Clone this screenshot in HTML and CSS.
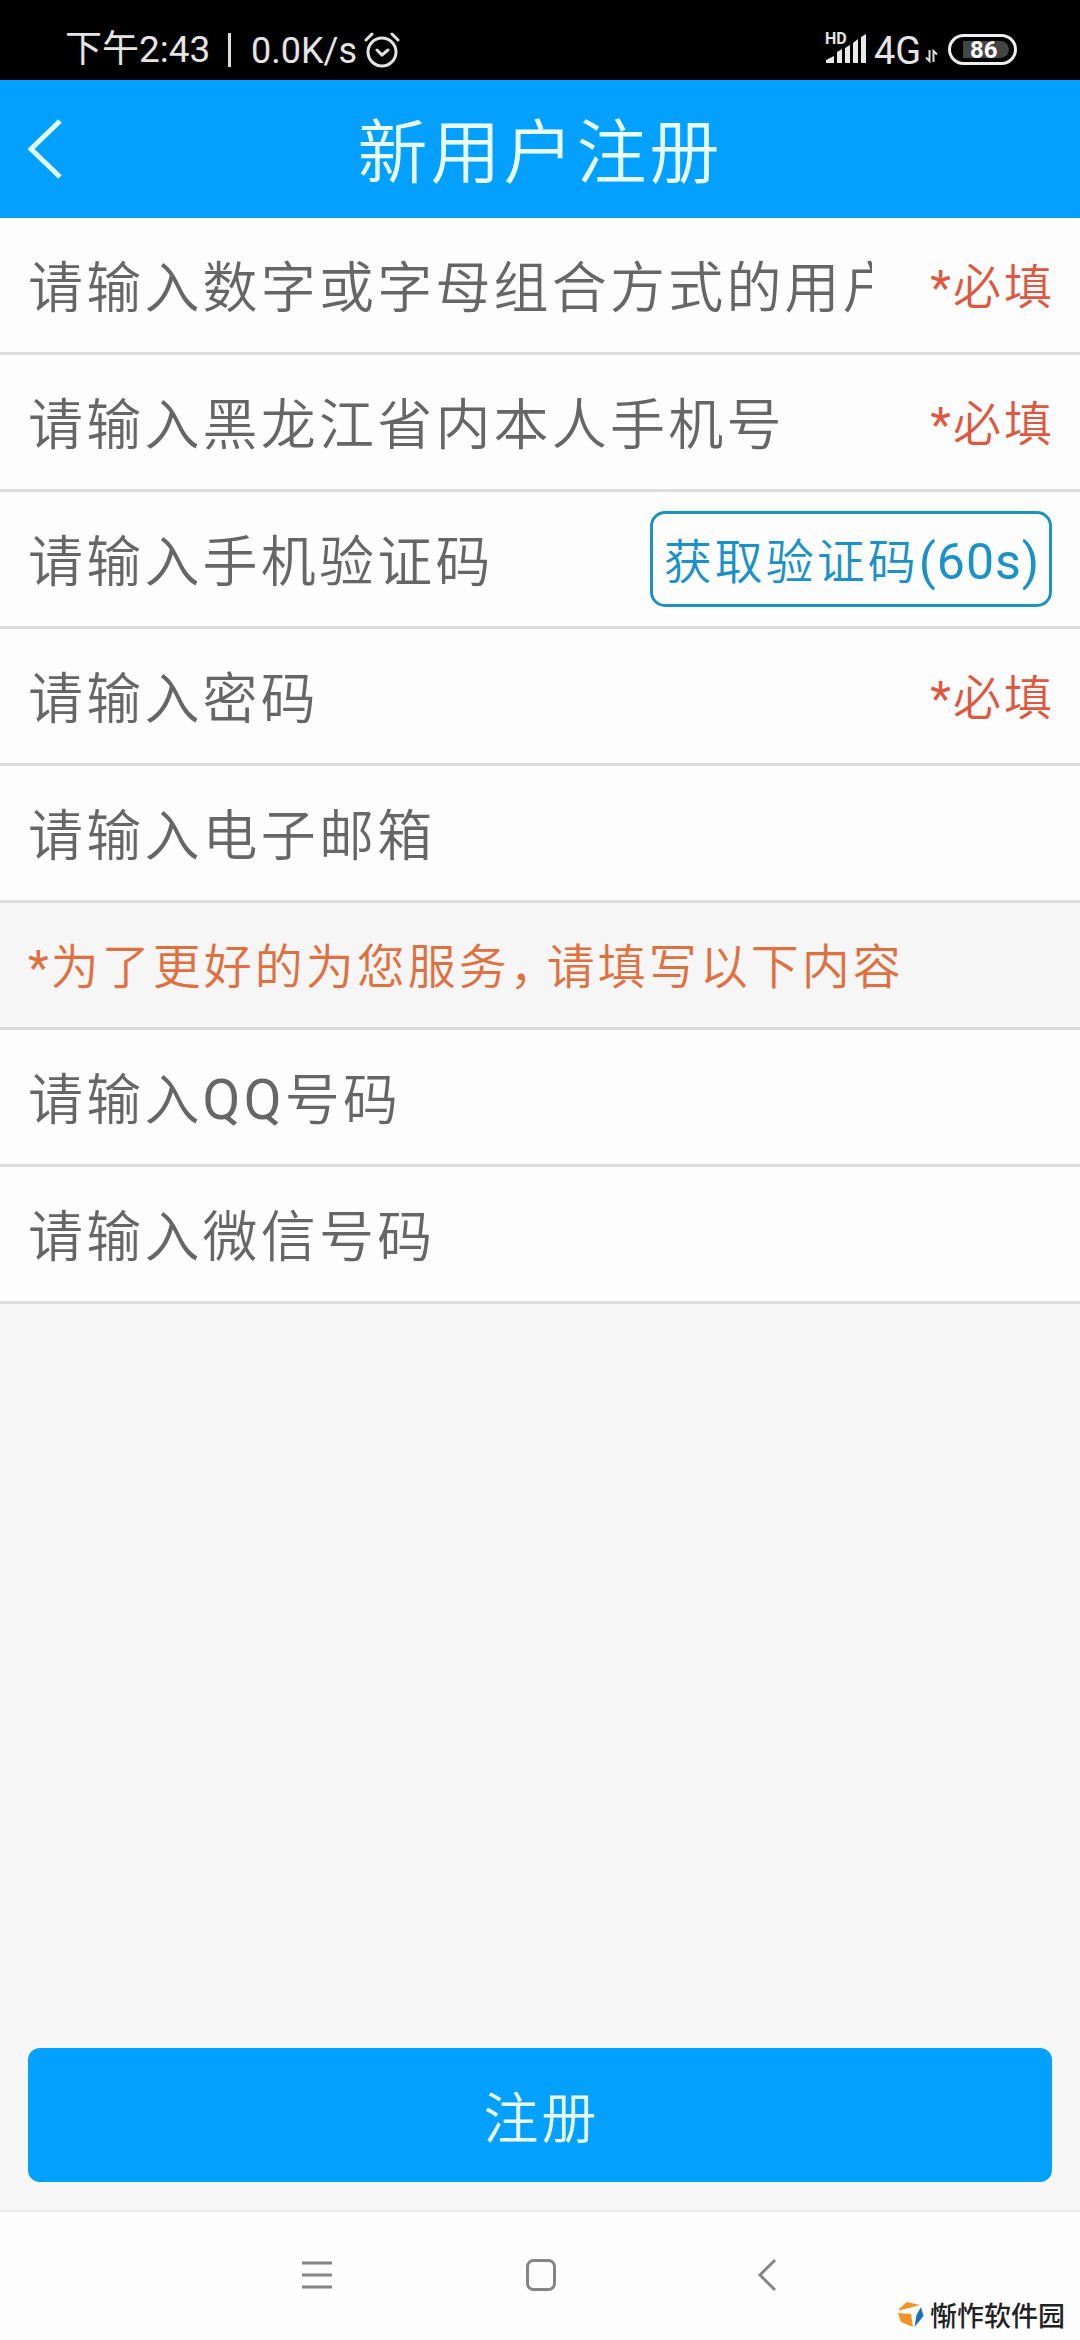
FILE: index.html
```html
<!DOCTYPE html>
<html lang="zh-CN">
<head>
  <meta charset="UTF-8" />
  <meta name="viewport" content="width=device-width, initial-scale=1.0" />
  <title>新用户注册</title>
  <link rel="stylesheet" href="styles.css">
</head>
<body>

  <!-- 状态栏 -->
  <div class="status-bar">
    <div class="status-left">
      <span class="clock">下午2:43</span>
      <span class="divider"></span>
      <span class="speed">0.0K/s</span>
      <svg class="alarm" width="36" height="36" viewBox="0 0 36 36">
        <circle cx="18" cy="20" r="14" />
        <path d="M13 18l5 5 6-5M2 8l6-6M34 8l-6-6" />
      </svg>
    </div>
    <div class="status-right">
      <div class="signal">
        <span class="hd">HD</span>
        <svg width="42" height="32" viewBox="0 0 42 32">
          <path d="M1 30v-3l8-4v7zM12 30V19l5-3v14zM20 30V15l5-3v18zM28 30V10l5-4v24zM36 30V4l5-3v29z" />
        </svg>
      </div>
      <span class="network">4G</span>
      <svg class="arrows" width="13" height="14" viewBox="0 0 13 14">
        <path d="M4.500 1v11L1 8.500M8.500 13V2l3.500 3.500" />
      </svg>
      <div class="battery"><span class="battery-level">86</span></div>
    </div>
  </div>

  <!-- 标题 -->
  <div class="header">
    <svg class="back-icon" width="36" height="62" viewBox="0 0 36 62">
      <path d="M32 3L3 31l29 28" />
    </svg>
    <h1>新用户注册</h1>
  </div>

  <!-- 注册表单 -->
  <form class="register-form">
    <div class="row">
      <input type="text" placeholder="请输入数字或字母组合方式的用户名">
      <span class="required"><span class="star">*</span>必填</span>
    </div>
    <div class="row">
      <input type="text" placeholder="请输入黑龙江省内本人手机号">
      <span class="required"><span class="star">*</span>必填</span>
    </div>
    <div class="row">
      <input type="text" class="code-input" placeholder="请输入手机验证码">
      <button type="button" class="code-button">获取验证码<span class="seconds">(60s)</span></button>
    </div>
    <div class="row">
      <input type="password" placeholder="请输入密码">
      <span class="required"><span class="star">*</span>必填</span>
    </div>
    <div class="row">
      <input type="text" placeholder="请输入电子邮箱">
    </div>
    <p class="notice"><span class="star">*</span>为了更好的为您服务<span class="comma">，</span>请填写以下内容</p>
    <div class="row">
      <input type="text" class="qq-input" placeholder="请输入QQ号码">
    </div>
    <div class="row">
      <input type="text" placeholder="请输入微信号码">
    </div>
    <button type="submit" class="submit-button">注册</button>
  </form>

  <!-- 导航栏 -->
  <div class="nav-bar">
    <svg width="32" height="34" viewBox="0 0 32 34">
      <path d="M1 5h30M1 17h30M1 29h30" />
    </svg>
    <svg class="home-icon" width="34" height="34" viewBox="0 0 34 34">
      <rect x="3.500" y="2.500" width="27" height="29" rx="6" />
    </svg>
    <svg width="20" height="34" viewBox="0 0 20 34">
      <path d="M18 2L3 17l15 15" />
    </svg>
    <div class="watermark">
      <svg width="26" height="27" viewBox="0 0 26 27">
        <path fill="#f39325" d="M1 8l8-7 13 3-9 2.500-12 3zM0 12l13 1 2 13-12-5z" />
        <path fill="#1d70b8" d="M23 6l2.500 9-9 11 2-12z" />
      </svg>
      <span>惭怍软件园</span>
    </div>
  </div>

</body>
</html>
```
FILE: styles.css
```css
* {
  box-sizing: border-box;
}

body {
  margin: 0;
  height: 2340px;
  display: flex;
  flex-direction: column;
  background-color: #f7f7f7;
  font-family: Roboto, 'Noto Sans CJK SC', sans-serif;
  overflow: hidden;
}

svg {
  display: block;
  fill: none;
  flex-shrink: 0;
}

input, button {
  font-family: inherit;
  font-weight: 350;
}

.status-bar {
  height: 80px;
  padding: 20px 63px 0 65px;
  display: flex;
  justify-content: space-between;
  background-color: #000;
  color: #e4e4e4;
  font-size: 37px;
}

.status-left, .status-right {
  height: 60px;
  display: flex;
  align-items: center;
  white-space: nowrap;
}

.status-right {
  height: 58px;
}

.clock {
  width: 145px;
  font-size: 37px;
  line-height: 44px;
}

.divider {
  width: 3px;
  height: 34px;
  margin: 0 20px 0 18px;
  background-color: #ddd;
}

.speed {
  width: 113px;
  padding-top: 2px;
  font-size: 36px;
}

.alarm {
  stroke: #e4e4e4;
  stroke-width: 3;
  stroke-linecap: round;
}

.signal {
  position: relative;
  margin-right: 7px;
}

.signal svg {
  fill: #e8e8e8;
}

.hd {
  position: absolute;
  left: 0;
  top: -2px;
  font-size: 16px;
  line-height: 16px;
  font-weight: 700;
}

.network {
  width: 51px;
  padding-top: 3px;
  font-size: 38px;
}

.arrows {
  margin: 14px 10px 0 0;
  stroke: #ddd;
  stroke-width: 2;
}

.battery {
  width: 69px;
  height: 31px;
  padding: 4px 5px 4px 12px;
  border: 3px solid #eee;
  border-radius: 16px;
}

.battery-level {
  display: block;
  height: 17px;
  border-radius: 0 9px 9px 0;
  background-color: #444;
  color: #fff;
  font-size: 24px;
  line-height: 18px;
  font-weight: 700;
  padding-left: 7px;
}

.header {
  height: 138px;
  padding: 0 28px;
  display: grid;
  grid-template-columns: 36px 1fr 36px;
  align-items: center;
  background-color: #03a0ff;
  color: #e9ffff;
}

.header h1 {
  margin: 0;
  padding-top: 9px;
  font-size: 70px;
  line-height: 100px;
  font-weight: 350;
  letter-spacing: 3px;
  text-align: center;
}

.back-icon {
  stroke: #e0ffff;
  stroke-width: 5;
}

.register-form {
  flex: 1;
  display: flex;
  flex-direction: column;
}

.row {
  height: 137px;
  padding: 0 28px;
  display: flex;
  align-items: center;
  justify-content: space-between;
  background-color: #fdfdfd;
  border-bottom: 3px solid #dcdcdc;
}

.row input {
  width: 844px;
  height: 106px;
  padding: 5px 0 0;
  border: none;
  outline: none;
  background: transparent;
  font-size: 55px;
  letter-spacing: 3.200px;
}

.row input::placeholder {
  color: #666;
  opacity: 1;
}

.row .code-input {
  width: 600px;
}

.row .qq-input {
  font-family: Roboto, 'Noto Sans CJK SC DemiLight', 'Noto Sans CJK SC', sans-serif;
  font-weight: 400;
}

.required {
  margin-right: -3px;
  padding-bottom: 4px;
  color: #de5740;
  font-size: 48px;
  font-weight: 350;
  letter-spacing: 3px;
  white-space: nowrap;
}

.star {
  font-weight: 400;
  letter-spacing: 2px;
}

.code-button {
  width: 402px;
  height: 96px;
  padding: 0 0 2px 2px;
  border: 3px solid #1c93bf;
  border-radius: 15px;
  background: transparent;
  color: #1a91c8;
  font-size: 48px;
  letter-spacing: 3px;
  white-space: nowrap;
}

.seconds {
  font-size: 50px;
  font-weight: 400;
  letter-spacing: 1px;
}

.notice {
  height: 127px;
  margin: 0;
  padding: 4px 28px 0;
  border-bottom: 3px solid #dcdcdc;
  background-color: #f6f6f6;
  color: #e0703f;
  font-size: 48px;
  line-height: 122px;
  font-weight: 350;
  letter-spacing: 3px;
}

/* 半宽逗号 */
.comma {
  margin-right: 10px;
  font-feature-settings: 'halt';
}

.submit-button {
  height: 134px;
  margin: auto 28px 28px;
  padding: 0 0 2px 3px;
  border: none;
  border-radius: 12px;
  background-color: #03a0ff;
  color: #e9ffff;
  font-size: 55px;
  letter-spacing: 3px;
}

.nav-bar {
  position: relative;
  height: 130px;
  padding: 0 303px 2px 301px;
  display: flex;
  align-items: center;
  justify-content: space-between;
  border-top: 2px solid #ececec;
  background-color: #fdfdfd;
}

.nav-bar svg {
  stroke: #858585;
  stroke-width: 3;
}

.nav-bar .home-icon {
  margin-right: 9px;
}

/* 右下角水印，叠在导航栏上 */
.watermark {
  position: absolute;
  right: 15px;
  bottom: 9px;
  height: 34px;
  display: flex;
  align-items: center;
  gap: 6px;
  color: #222;
  font-size: 27px;
  font-weight: 500;
}

.nav-bar .watermark svg {
  stroke: none;
}
```
